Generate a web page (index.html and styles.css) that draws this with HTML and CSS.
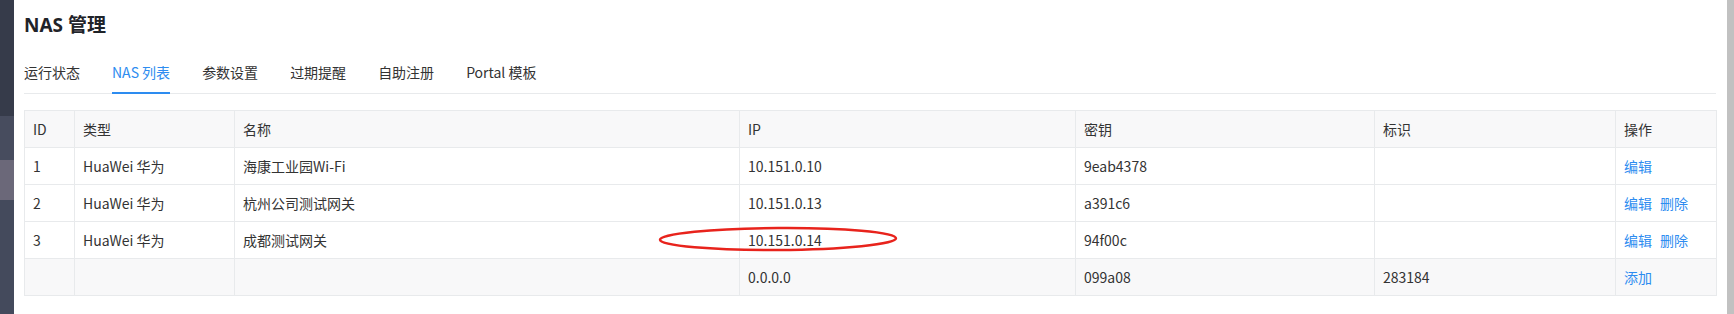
FILE: index.html
```
<!DOCTYPE html>
<html lang="zh-CN">
    <head>
        <meta charset="UTF-8">
        <meta name="viewport" content="width=device-width, initial-scale=1.0">
        <title>NAS 管理</title>
        <link rel="stylesheet" href="styles.css">
    </head>
    <body>
        <div class="page">
            <aside class="sidebar">
                <div class="sbTop"></div>
                <div class="sbItem"></div>
                <div class="sbActive"></div>
                <div class="sbRest"></div>
            </aside>
            <main class="content">
                <h1 class="title">NAS 管理</h1>
                <nav class="tabs">
                    <span class="tab">运行状态</span>
                    <span class="tab active">NAS 列表</span>
                    <span class="tab">参数设置</span>
                    <span class="tab">过期提醒</span>
                    <span class="tab">自助注册</span>
                    <span class="tab">Portal 模板</span>
                </nav>
                <div class="tableWrap">
                    <table class="nasTable">
                        <colgroup>
                            <col class="cId">
                            <col class="cType">
                            <col class="cName">
                            <col class="cIp">
                            <col class="cKey">
                            <col class="cTag">
                            <col class="cOps">
                        </colgroup>
                        <thead>
                            <tr>
                                <td>ID</td>
                                <td>类型</td>
                                <td>名称</td>
                                <td>IP</td>
                                <td>密钥</td>
                                <td>标识</td>
                                <td>操作</td>
                            </tr>
                        </thead>
                        <tbody>
                            <tr>
                                <td>1</td>
                                <td>HuaWei 华为</td>
                                <td>海康工业园Wi-Fi</td>
                                <td>10.151.0.10</td>
                                <td>9eab4378</td>
                                <td></td>
                                <td><a class="op">编辑</a></td>
                            </tr>
                            <tr>
                                <td>2</td>
                                <td>HuaWei 华为</td>
                                <td>杭州公司测试网关</td>
                                <td>10.151.0.13</td>
                                <td>a391c6</td>
                                <td></td>
                                <td><a class="op">编辑</a><a class="op">删除</a></td>
                            </tr>
                            <tr>
                                <td>3</td>
                                <td>HuaWei 华为</td>
                                <td>成都测试网关</td>
                                <td>10.151.0.14</td>
                                <td>94f00c</td>
                                <td></td>
                                <td><a class="op">编辑</a><a class="op">删除</a></td>
                            </tr>
                            <tr class="addRow">
                                <td></td>
                                <td></td>
                                <td></td>
                                <td>0.0.0.0</td>
                                <td>099a08</td>
                                <td>283184</td>
                                <td><a class="op">添加</a></td>
                            </tr>
                        </tbody>
                    </table>
                    <svg class="mark" width="248" height="30" viewBox="0 0 248 30">
                        <ellipse cx="124" cy="15" rx="118" ry="11" fill="none" stroke="#e8231c" stroke-width="2.5" transform="rotate(-0.4 124 15)"/>
                    </svg>
                </div>
            </main>
            <div class="scrollbar"></div>
        </div>
    </body>
</html>
```

FILE: styles.css
```
html, body {
    margin: 0;
    background: #fff;
}
.page {
    display: flex;
    height: 100vh;
    overflow: hidden;
    font-family: "Noto Sans CJK SC", "Noto Sans", sans-serif;
    color: #333;
}
.sidebar {
    width: 14px;
    flex: none;
    display: flex;
    flex-direction: column;
}
.sbTop {
    height: 116px;
    background: #363b4a;
}
.sbItem {
    height: 44px;
    background: #474c5e;
}
.sbActive {
    height: 40px;
    background: #6b6879;
}
.sbRest {
    flex: 1;
    background: #444a5c;
}
.content {
    flex: 1;
    padding: 0 11px 0 10px;
    min-width: 0;
}
.title {
    margin: 12px 0 0;
    font-family: "Noto Sans", "Noto Sans CJK SC", sans-serif;
    font-size: 19px;
    line-height: 26px;
    font-weight: bold;
    color: #1f2329;
}
.tabs {
    display: flex;
    gap: 32px;
    margin-top: 23px;
    border-bottom: 1px solid #e8eaec;
}
.tab {
    font-size: 14px;
    line-height: 22px;
    padding-bottom: 9px;
    margin-bottom: -1px;
    border-bottom: 2px solid transparent;
    cursor: pointer;
}
.tab.active {
    color: #2d8cf0;
    border-bottom-color: #2d8cf0;
}
.tableWrap {
    position: relative;
    margin-top: 16px;
}
.nasTable {
    width: 1692px;
    table-layout: fixed;
    border-collapse: collapse;
    font-size: 14px;
}
.cId { width: 50px; }
.cType { width: 160px; }
.cName { width: 505px; }
.cIp { width: 336px; }
.cKey { width: 299px; }
.cTag { width: 241px; }
.cOps { width: 101px; }
.nasTable td {
    height: 36px;
    padding: 0 8px;
    border: 1px solid #e8eaec;
    white-space: nowrap;
}
.nasTable thead td, .addRow td {
    background: #f8f8f9;
}
.op {
    color: #2d8cf0;
    cursor: pointer;
    margin-right: 8px;
}
.mark {
    position: absolute;
    left: 630px;
    top: 114px;
    pointer-events: none;
}
.scrollbar {
    width: 7px;
    flex: none;
    background: #c1c1c1;
}
```
